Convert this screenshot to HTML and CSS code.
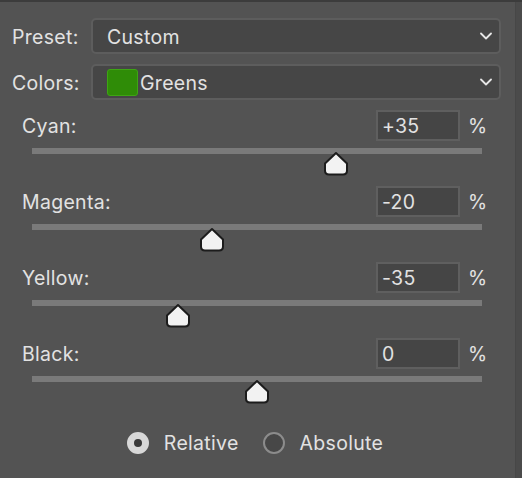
FILE: index.html
```html
<!DOCTYPE html>
<html>
<head>
<meta charset="utf-8">
<link rel="stylesheet" href="styles.css">
</head>
<body>
<div class="topbar"></div>
<div class="frame">
  <div class="panel">
    <div class="field-row">
      <div class="field-label">Preset:</div>
      <div class="select">
        <span class="select-text">Custom</span>
        <svg class="chev" width="12" height="8" viewBox="0 0 12 8"><path d="M1 1.5 L6 6.5 L11 1.5" fill="none" stroke="#e6e6e6" stroke-width="1.8" stroke-linecap="round" stroke-linejoin="round"/></svg>
      </div>
    </div>
    <div class="field-row">
      <div class="field-label">Colors:</div>
      <div class="select">
        <span class="swatch"></span>
        <span class="select-text tight">Greens</span>
        <svg class="chev" width="12" height="8" viewBox="0 0 12 8"><path d="M1 1.5 L6 6.5 L11 1.5" fill="none" stroke="#e6e6e6" stroke-width="1.8" stroke-linecap="round" stroke-linejoin="round"/></svg>
      </div>
    </div>

    <div class="sliders">
      <div class="slider">
        <div class="slider-head">
          <span class="slider-label">Cyan:</span>
          <div class="num">+35</div>
          <span class="pct">%</span>
        </div>
        <div class="track">
          <svg class="thumb" style="left: 67.5%" width="26" height="25" viewBox="0 0 26 25"><path d="M13 2 L24 12.5 V19.5 Q24 23.5 20 23.5 H6 Q2 23.5 2 19.5 V12.5 Z" fill="#f2f2f2" stroke="#1c1c1c" stroke-width="2" stroke-linejoin="round"/></svg>
        </div>
      </div>
      <div class="slider">
        <div class="slider-head">
          <span class="slider-label">Magenta:</span>
          <div class="num">-20</div>
          <span class="pct">%</span>
        </div>
        <div class="track">
          <svg class="thumb" style="left: 40%" width="26" height="25" viewBox="0 0 26 25"><path d="M13 2 L24 12.5 V19.5 Q24 23.5 20 23.5 H6 Q2 23.5 2 19.5 V12.5 Z" fill="#f2f2f2" stroke="#1c1c1c" stroke-width="2" stroke-linejoin="round"/></svg>
        </div>
      </div>
      <div class="slider">
        <div class="slider-head">
          <span class="slider-label">Yellow:</span>
          <div class="num">-35</div>
          <span class="pct">%</span>
        </div>
        <div class="track">
          <svg class="thumb" style="left: 32.5%" width="26" height="25" viewBox="0 0 26 25"><path d="M13 2 L24 12.5 V19.5 Q24 23.5 20 23.5 H6 Q2 23.5 2 19.5 V12.5 Z" fill="#f2f2f2" stroke="#1c1c1c" stroke-width="2" stroke-linejoin="round"/></svg>
        </div>
      </div>
      <div class="slider">
        <div class="slider-head">
          <span class="slider-label">Black:</span>
          <div class="num">0</div>
          <span class="pct">%</span>
        </div>
        <div class="track">
          <svg class="thumb" style="left: 50%" width="26" height="25" viewBox="0 0 26 25"><path d="M13 2 L24 12.5 V19.5 Q24 23.5 20 23.5 H6 Q2 23.5 2 19.5 V12.5 Z" fill="#f2f2f2" stroke="#1c1c1c" stroke-width="2" stroke-linejoin="round"/></svg>
        </div>
      </div>
    </div>

    <div class="radios">
      <label class="radio"><span class="dot on"></span><span class="radio-text">Relative</span></label>
      <label class="radio"><span class="dot"></span><span class="radio-text">Absolute</span></label>
    </div>
  </div>
  <div class="edge"></div>
</div>
</body>
</html>
```

FILE: styles.css
```css
* { box-sizing: border-box; }
html, body { margin: 0; padding: 0; }
body {
  width: 522px;
  height: 478px;
  background: #535353;
  font-family: "Inter", "Liberation Sans", Arial, sans-serif;
  color: #e2e2e2;
  font-size: 19.5px;
  letter-spacing: 0.3px;
  line-height: 1;
  overflow: hidden;
}
.topbar { height: 2px; background: #3c3c3c; }
.frame { display: flex; height: 476px; }
.panel { width: 515px; padding-top: 16px; }
.edge { flex: 1; background: #4b4b4b; border-left: 1px solid #474747; }

.field-row { display: flex; align-items: center; height: 36px; margin-bottom: 10px; }
.field-label { width: 91px; padding-left: 12px; padding-top: 3px; }
.select {
  width: 410px; height: 36px;
  background: #464646;
  border: 2px solid #5d5d5d;
  border-radius: 5px;
  display: flex; align-items: center;
  padding-left: 14px; padding-right: 6px;
}
.select-text { flex: 1; padding-top: 3px; }
.select-text.tight { margin-left: 2px; }
.swatch {
  width: 31px; height: 27px;
  background: #2f8c07;
  border: 1px solid #3ea514;
  border-radius: 3px;
}
.chev { margin-right: 1px; }

.sliders { padding-left: 22px; width: 482px; margin-top: 2px; }
.slider { height: 76px; }
.slider-head { display: flex; align-items: center; height: 31px; }
.slider-label { flex: 1; padding-top: 2px; }
.num {
  width: 84px; height: 31px;
  background: #454545;
  border: 2px solid #5f5f5f;
  padding-left: 4px; padding-top: 2px;
  display: flex; align-items: center;
}
.pct { width: 22px; padding-left: 8px; padding-top: 2px; }
.track {
  position: relative;
  margin: 7px 0 0 10px;
  height: 6px;
  background: #7a7a7a;
}
.thumb { position: absolute; top: 3px; margin-left: -13px; }

.radios { display: flex; justify-content: center; align-items: center; margin-top: 18px; padding-right: 5px; }
.radio { display: flex; align-items: center; }
.radio + .radio { margin-left: 24px; }
.radio-text { padding-top: 2px; }
.dot {
  width: 22px; height: 22px; border-radius: 50%;
  background: #474747;
  border: 2px solid #8c8c8c;
  margin-right: 15px;
  position: relative;
}
.dot.on { background: #d8d8d8; border-color: #d8d8d8; }
.dot.on::after {
  content: ""; position: absolute; left: 5px; top: 5px;
  width: 8px; height: 8px; border-radius: 50%; background: #393939;
}
```
